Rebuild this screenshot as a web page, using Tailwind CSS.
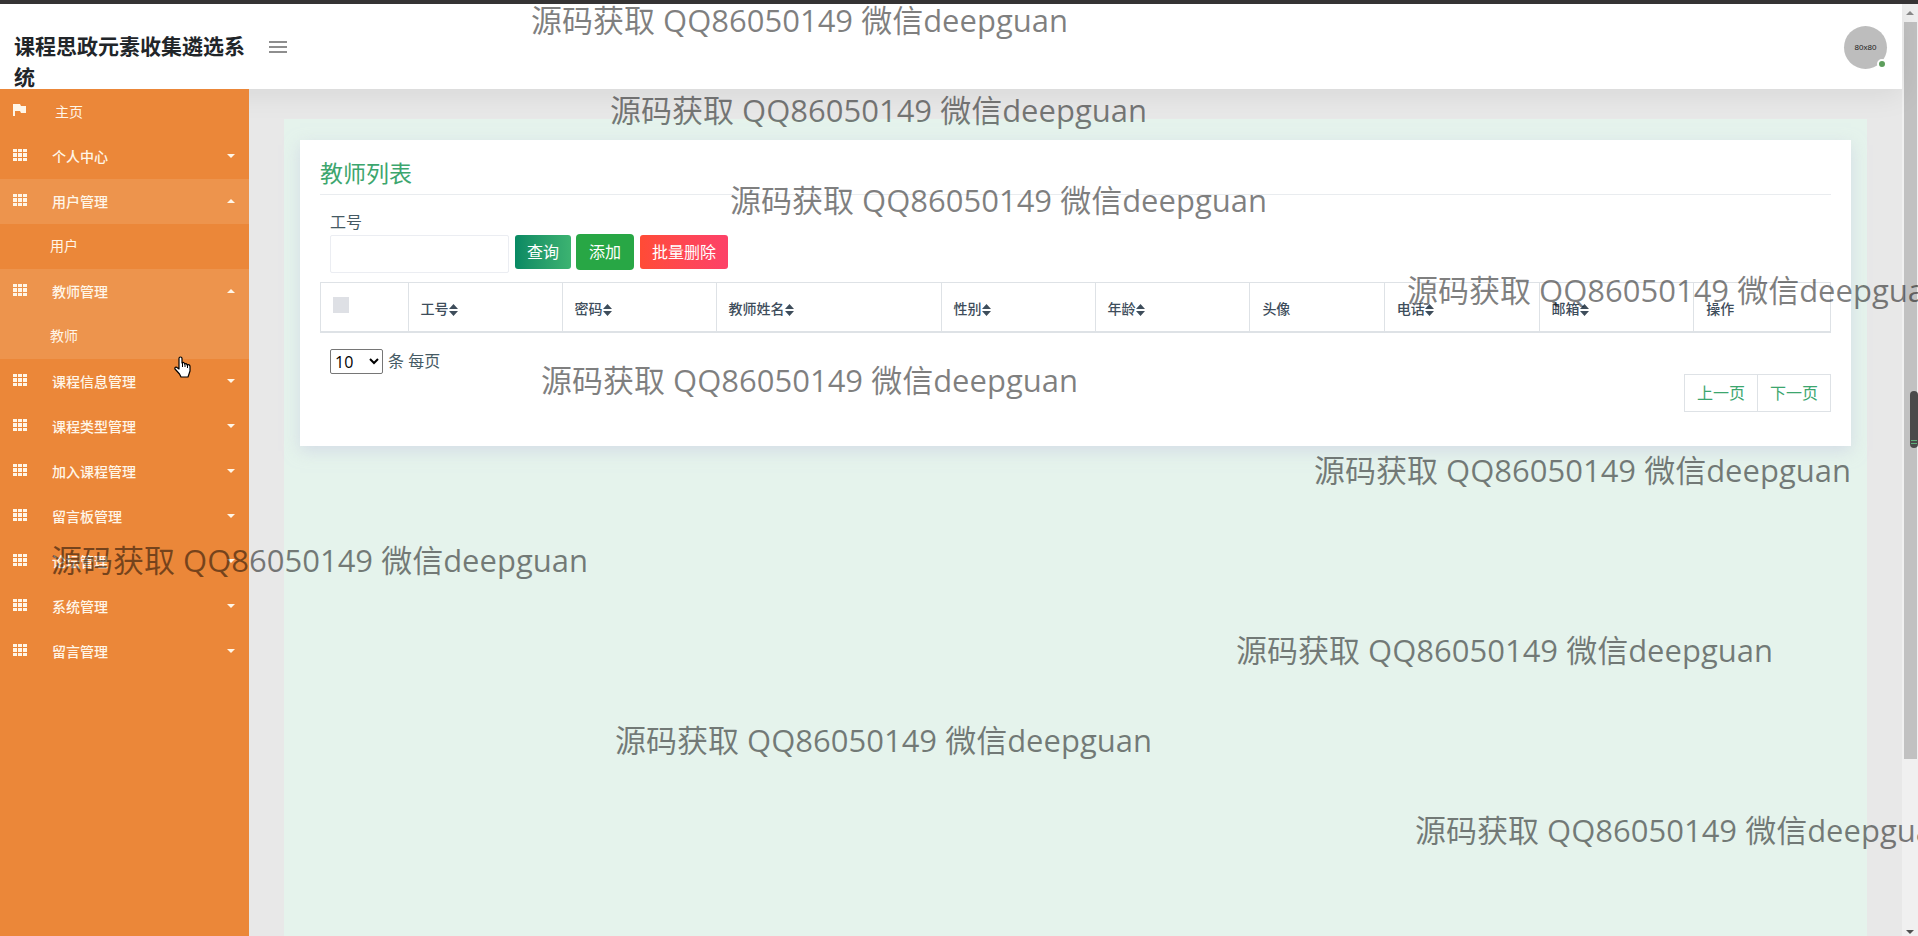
<!DOCTYPE html>
<html lang="zh-CN">
<head>
<meta charset="utf-8">
<title>课程思政元素收集遴选系统</title>
<script src="https://cdn.jsdelivr.net/npm/@tailwindcss/browser@4"></script>
</head>
<body class="relative flex h-screen flex-col overflow-hidden bg-[#e8e8e8] font-['Open_Sans','Noto_Sans_CJK_SC',sans-serif] text-base text-[#455a64]">
<svg class="hidden" aria-hidden="true">
  <symbol id="grid" viewBox="0 0 14 12"><path fill="currentColor" d="M0 0h4v3H0zM5 0h4v3H5zM10 0h4v3h-4zM0 4h4v4H0zM5 4h4v4H5zM10 4h4v4h-4zM0 9h4v3H0zM5 9h4v3H5zM10 9h4v3h-4z"/></symbol>
  <symbol id="down" viewBox="0 0 8 4"><path fill="currentColor" d="M0 0h8L4 4z"/></symbol>
  <symbol id="up" viewBox="0 0 8 4"><path fill="currentColor" d="M0 4h8L4 0z"/></symbol>
  <symbol id="sort" viewBox="0 0 9 12"><path fill="currentColor" d="M0 5 4.500 0 9 5zM0 7h9l-4.500 5z"/></symbol>
</svg>
<div class="h-1 shrink-0 bg-[#373536]"></div>
<div class="flex min-h-0 flex-1">
  <div class="flex min-w-0 flex-1 flex-col">
    <header class="relative z-10 flex h-[85px] shrink-0 items-center bg-white pr-[15px] shadow-[0_5px_30px_rgba(0,0,0,0.08)]">
      <h1 class="h-full w-[249px] shrink-0 overflow-hidden pt-[27px] pl-3.5 text-[21px] leading-[31px] font-bold text-[#212529]">课程思政元素收集遴选系统</h1>
      <button aria-label="菜单" class="ml-5 flex w-[18px] flex-col gap-[3px] text-[#8e8e8e]"><span class="h-0.5 bg-current"></span><span class="h-0.5 bg-current"></span><span class="h-0.5 bg-current"></span></button>
      <button aria-label="账户" class="relative mt-0.5 ml-auto flex size-[43px] items-center justify-center rounded-full bg-[#bdbdbd] font-['Liberation_Sans',sans-serif] text-[8px] text-[#222]">80x80<span class="absolute right-0 bottom-0 size-[10px] rounded-full border-2 border-white bg-[#5d9e5c]"></span></button>
    </header>
    <div class="flex min-h-0 flex-1">
      <nav class="z-20 w-[249px] shrink-0 bg-[#eb8739] text-sm text-[#fff6e8]">
        <ul>
          <li><a href="#" class="flex h-[45px] items-center pl-[13px]"><svg class="mb-1 h-3 w-3.5" viewBox="0 0 14 12"><path fill="currentColor" d="M0 0h7l1 2h5v7H8L7 7H2v5H0z"/></svg><span class="ml-7">主页</span></a></li>
          <li><a href="#" class="flex h-[45px] items-center pr-3.5 pl-[13px]"><svg class="mb-1 h-3 w-3.5"><use href="#grid"/></svg><span class="ml-[25px] font-medium">个人中心</span><svg class="mb-0.5 ml-auto h-1 w-2"><use href="#down"/></svg></a></li>
          <li><a href="#" class="flex h-[45px] items-center bg-[#ed944d] pr-3.5 pl-[13px]"><svg class="mb-1 h-3 w-3.5"><use href="#grid"/></svg><span class="ml-[25px] font-medium">用户管理</span><svg class="mb-0.5 ml-auto h-1 w-2"><use href="#up"/></svg></a>
            <a href="#" class="flex h-[45px] items-center pb-0.5 pl-[50px]">用户</a></li>
          <li class="bg-[#ed944d]"><a href="#" class="flex h-[45px] items-center pr-3.5 pl-[13px]"><svg class="mb-1 h-3 w-3.5"><use href="#grid"/></svg><span class="ml-[25px] font-medium">教师管理</span><svg class="mb-0.5 ml-auto h-1 w-2"><use href="#up"/></svg></a>
            <a href="#" class="flex h-[45px] items-center pb-0.5 pl-[50px]">教师</a></li>
          <li><a href="#" class="flex h-[45px] items-center pr-3.5 pl-[13px]"><svg class="mb-1 h-3 w-3.5"><use href="#grid"/></svg><span class="ml-[25px] font-medium">课程信息管理</span><svg class="mb-0.5 ml-auto h-1 w-2"><use href="#down"/></svg></a></li>
          <li><a href="#" class="flex h-[45px] items-center pr-3.5 pl-[13px]"><svg class="mb-1 h-3 w-3.5"><use href="#grid"/></svg><span class="ml-[25px] font-medium">课程类型管理</span><svg class="mb-0.5 ml-auto h-1 w-2"><use href="#down"/></svg></a></li>
          <li><a href="#" class="flex h-[45px] items-center pr-3.5 pl-[13px]"><svg class="mb-1 h-3 w-3.5"><use href="#grid"/></svg><span class="ml-[25px] font-medium">加入课程管理</span><svg class="mb-0.5 ml-auto h-1 w-2"><use href="#down"/></svg></a></li>
          <li><a href="#" class="flex h-[45px] items-center pr-3.5 pl-[13px]"><svg class="mb-1 h-3 w-3.5"><use href="#grid"/></svg><span class="ml-[25px] font-medium">留言板管理</span><svg class="mb-0.5 ml-auto h-1 w-2"><use href="#down"/></svg></a></li>
          <li><a href="#" class="flex h-[45px] items-center pr-3.5 pl-[13px]"><svg class="mb-1 h-3 w-3.5"><use href="#grid"/></svg><span class="ml-[25px] font-medium">论坛管理</span><svg class="mb-0.5 ml-auto h-1 w-2"><use href="#down"/></svg></a></li>
          <li><a href="#" class="flex h-[45px] items-center pr-3.5 pl-[13px]"><svg class="mb-1 h-3 w-3.5"><use href="#grid"/></svg><span class="ml-[25px] font-medium">系统管理</span><svg class="mb-0.5 ml-auto h-1 w-2"><use href="#down"/></svg></a></li>
          <li><a href="#" class="flex h-[45px] items-center pr-3.5 pl-[13px]"><svg class="mb-1 h-3 w-3.5"><use href="#grid"/></svg><span class="ml-[25px] font-medium">留言管理</span><svg class="mb-0.5 ml-auto h-1 w-2"><use href="#down"/></svg></a></li>
        </ul>
      </nav>
      <main class="min-w-0 flex-1 px-[35px] pt-[30px]">
        <div class="h-full bg-[#e5f3ec] px-4 pt-[21px]">
          <section class="bg-white px-5 pt-[19px] pb-[34px] shadow-[0_5px_15px_rgba(200,205,225,0.6)]">
            <h2 class="h-9 border-b border-[#e9ecef] text-[23px] leading-7 text-[#3ca66e]">教师列表</h2>
            <form class="px-2.5 pt-4">
              <label for="no" class="block h-[23px] leading-[23px]">工号</label>
              <div class="flex items-center">
                <input id="no" type="text" class="h-[38px] w-[179px] rounded-xs border border-[#ebedf2] px-3">
                <button type="button" class="mb-1 ml-1.5 h-[34px] w-14 rounded-[3px] bg-linear-to-r from-[#078963] to-[#3cb371] text-white">查询</button>
                <button type="button" class="mb-1 ml-[5px] h-9 w-[58px] rounded bg-[#28a745] text-white">添加</button>
                <button type="button" class="mb-1 ml-1.5 h-[34px] w-[88px] rounded-[3px] bg-linear-to-r from-[#ff4b35] to-[#fd4168] text-white">批量删除</button>
              </div>
            </form>
            <table class="mt-2 w-full table-fixed border-collapse border border-[#dee2e6] text-left text-sm text-[#3e4d5b]">
              <colgroup><col class="w-[5.8%]"><col class="w-[10.2%]"><col class="w-[10.2%]"><col class="w-[14.9%]"><col class="w-[10.2%]"><col class="w-[10.25%]"><col class="w-[8.9%]"><col class="w-[10.25%]"><col class="w-[10.25%]"><col></colgroup>
              <thead>
                <tr class="h-[49px] border-b-2 border-[#dee2e6]">
                  <th class="border-r border-[#dee2e6] px-3 pb-1"><input type="checkbox" aria-label="全选" class="block size-4 appearance-none bg-[#dee0e5]"></th>
                  <th class="border-r border-[#dee2e6] px-3 pt-1 font-medium">工号<svg class="inline h-3 w-[9px]"><use href="#sort"/></svg></th>
                  <th class="border-r border-[#dee2e6] px-3 pt-1 font-medium">密码<svg class="inline h-3 w-[9px]"><use href="#sort"/></svg></th>
                  <th class="border-r border-[#dee2e6] px-3 pt-1 font-medium">教师姓名<svg class="inline h-3 w-[9px]"><use href="#sort"/></svg></th>
                  <th class="border-r border-[#dee2e6] px-3 pt-1 font-medium">性别<svg class="inline h-3 w-[9px]"><use href="#sort"/></svg></th>
                  <th class="border-r border-[#dee2e6] px-3 pt-1 font-medium">年龄<svg class="inline h-3 w-[9px]"><use href="#sort"/></svg></th>
                  <th class="border-r border-[#dee2e6] px-3 pt-1 font-medium">头像</th>
                  <th class="border-r border-[#dee2e6] px-3 pt-1 font-medium">电话<svg class="inline h-3 w-[9px]"><use href="#sort"/></svg></th>
                  <th class="border-r border-[#dee2e6] px-3 pt-1 font-medium">邮箱<svg class="inline h-3 w-[9px]"><use href="#sort"/></svg></th>
                  <th class="px-3 pt-1 font-medium">操作</th>
                </tr>
              </thead>
            </table>
            <div class="mt-4 flex items-center gap-[5px] pl-2.5">
              <select id="size" class="h-[25px] w-[53px] rounded-xs border border-[#767676] bg-white text-black"><option>10</option></select>
              <label for="size">条 每页</label>
            </div>
            <div class="flex justify-end">
              <a href="#" class="flex h-[38px] items-center border border-[#dee2e6] px-3 text-[#3ca66e]">上一页</a>
              <a href="#" class="-ml-px flex h-[38px] items-center border border-[#dee2e6] px-3 text-[#3ca66e]">下一页</a>
            </div>
          </section>
        </div>
      </main>
    </div>
  </div>
  <div class="flex w-4 shrink-0 flex-col items-center bg-[#f0f0f0]" aria-hidden="true">
    <svg class="my-[7px] h-1 w-2 shrink-0 text-[#8a8a8a]"><use href="#up"/></svg>
    <div class="h-[737px] w-[13px] bg-[#c1c1c1]"></div>
    <svg class="mt-auto mb-0.5 h-1 w-2 shrink-0 text-[#505050]"><use href="#down"/></svg>
  </div>
</div>

<!-- Screen-recorder handle and mouse pointer float above the page -->
<div class="absolute top-[391px] right-0 z-30 flex h-[57px] w-2 items-end justify-center rounded-full bg-[#4a4a4a] pb-1"><span class="h-1 w-1.5 border-y border-[#5fae7a]"></span></div>
<svg class="absolute top-[356px] left-[174px] z-30 h-[22px] w-[18px]" viewBox="0 0 18 22"><path fill="#fff" stroke="#000" stroke-width="1.200" stroke-linejoin="round" d="M5 13V2.500c0-2 3-2 3 0V7c1-1 2.500-.6 2.500 1 1-.9 2.500-.5 2.500 1 1.500-.8 3 0 3 1.500V15l-2 6H7l-1.500-3L1 13c-.6-1.500 1-2.500 2-1.500z"/><path stroke="#000" d="M8.500 7v4M11 8v3M13.500 9v3"/></svg>

<!-- Watermarks scattered over the screen -->
<div class="pointer-events-none absolute inset-0 z-40 overflow-hidden text-[31px] leading-[34px] whitespace-nowrap text-black/50">
  <span class="absolute top-[3px] left-[531px]">源码获取 QQ86050149 微信deepguan</span>
  <span class="absolute top-[93px] left-[610px]">源码获取 QQ86050149 微信deepguan</span>
  <span class="absolute top-[183px] left-[730px]">源码获取 QQ86050149 微信deepguan</span>
  <span class="absolute top-[273px] left-[1407px]">源码获取 QQ86050149 微信deepguan</span>
  <span class="absolute top-[363px] left-[541px]">源码获取 QQ86050149 微信deepguan</span>
  <span class="absolute top-[453px] left-[1314px]">源码获取 QQ86050149 微信deepguan</span>
  <span class="absolute top-[543px] left-[51px]">源码获取 QQ86050149 微信deepguan</span>
  <span class="absolute top-[633px] left-[1236px]">源码获取 QQ86050149 微信deepguan</span>
  <span class="absolute top-[723px] left-[615px]">源码获取 QQ86050149 微信deepguan</span>
  <span class="absolute top-[813px] left-[1415px]">源码获取 QQ86050149 微信deepguan</span>
</div>
</body>
</html>
